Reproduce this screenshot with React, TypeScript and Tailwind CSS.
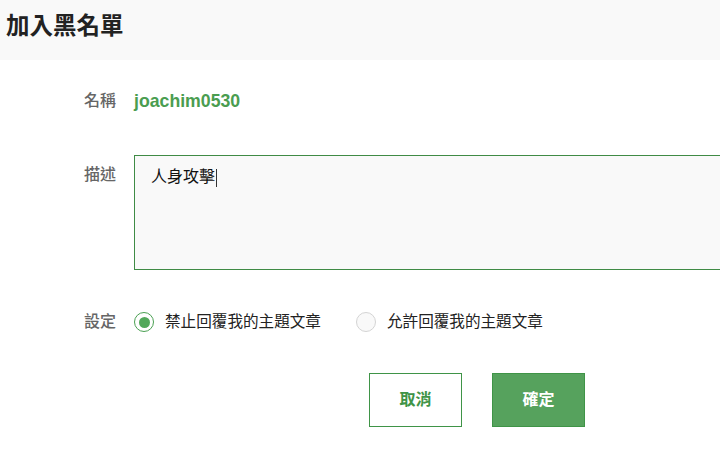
export default function App() {
  const font = { fontFamily: '"Liberation Sans", "Noto Sans CJK TC", sans-serif' };
  return (
    <div className="w-[720px] h-[463px] overflow-hidden bg-white" style={font}>
      <div className="h-[60px] bg-[#f9f9f9] pl-[6px] flex items-center">
        <h1 className="text-[23.5px] font-bold text-[#222] leading-none -mt-[6px]">加入黑名單</h1>
      </div>

      <div className="pl-[84px]">
        <div className="flex items-center h-[20px] mt-[31px]">
          <span className="w-[50px] shrink-0 text-[16px] font-medium text-[#666]">名稱</span>
          <span className="text-[17.7px] font-bold text-[#4a9d50]">joachim0530</span>
        </div>

        <div className="flex mt-[44px]">
          <span className="w-[50px] shrink-0 text-[16px] font-medium text-[#666] pt-[8px]">描述</span>
          <div className="w-[640px] shrink-0 h-[115px] border border-[#3f8b45] bg-[#f9f9f9] pl-[16px] pt-[9px]">
            <span className="text-[16px] text-[#111]">人身攻擊</span>
            <span className="inline-block w-px h-[18px] bg-[#333] align-middle ml-px" />
          </div>
        </div>

        <div className="flex items-center mt-[42px] h-[20px]">
          <span className="w-[50px] shrink-0 text-[16px] font-medium text-[#666]">設定</span>
          <div className="flex items-center">
            <span className="w-[20px] h-[20px] rounded-full border-[1.5px] border-[#4aa052] bg-white flex items-center justify-center">
              <span className="w-[11px] h-[11px] rounded-full bg-[#52a85a]" />
            </span>
            <span className="ml-[11px] text-[15.6px] text-[#222]">禁止回覆我的主題文章</span>
          </div>
          <div className="flex items-center ml-[35px]">
            <span className="w-[20px] h-[20px] rounded-full border border-[#d4d4d4] bg-[#f9f9f9]" />
            <span className="ml-[11px] text-[15.6px] text-[#222]">允許回覆我的主題文章</span>
          </div>
        </div>

        <div className="flex mt-[41px] ml-[285px] gap-[30px]">
          <button className="w-[93px] h-[54px] border border-[#3f9447] bg-white text-[#3f9447] text-[16px] font-bold">
            取消
          </button>
          <button className="w-[93px] h-[54px] border border-[#3f9447] bg-[#56a25d] text-white text-[16px] font-bold">
            確定
          </button>
        </div>
      </div>
    </div>
  );
}
